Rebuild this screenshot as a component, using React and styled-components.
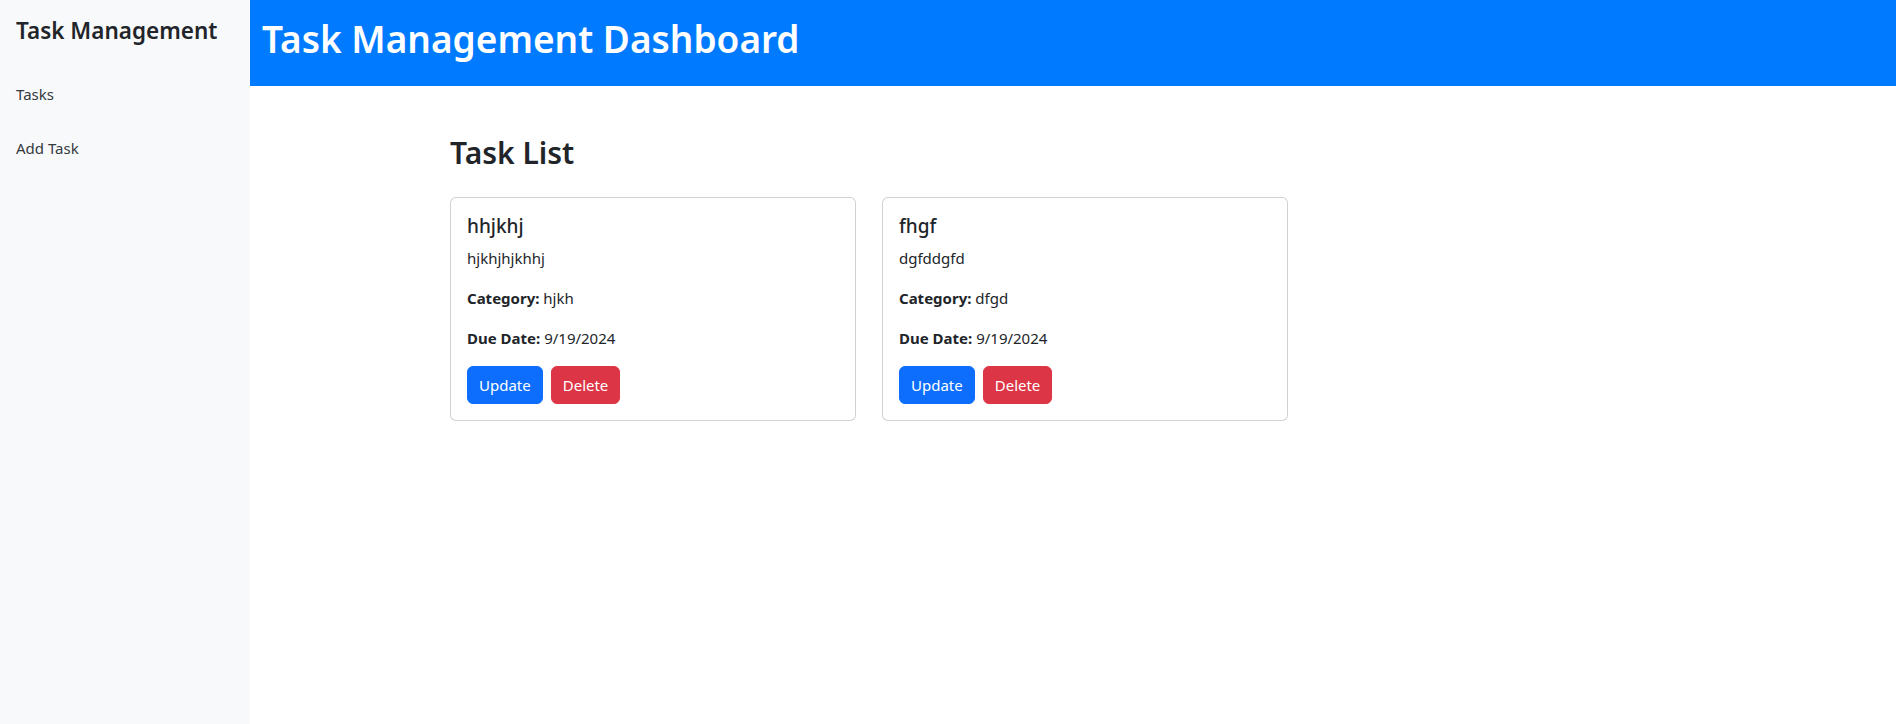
import React from "react"
import styled, { createGlobalStyle } from "styled-components"

const GlobalStyle = createGlobalStyle`
  * {
    box-sizing: border-box;
  }

  body {
    margin: 0;
    font-family: "Noto Sans", "Open Sans", Arial, sans-serif;
    font-size: 16px;
    line-height: 1.5;
    color: #212529;
    background: #fff;
  }
`

const Layout = styled.div`
  display: flex;
  min-height: 100vh;
`

const Sidebar = styled.aside`
  width: 250px;
  flex-shrink: 0;
  background: #f8f9fa;
  padding: 17px 16px;
`

const Brand = styled.h4`
  margin: 0 0 23px;
  font-size: 22.5px;
  font-weight: 600;
  line-height: 1.2;
`

const NavList = styled.ul`
  list-style: none;
  margin: 0;
  padding: 0;
`

const NavItem = styled.li`
  padding: 15px 0;
  font-size: 15px;
  line-height: 24px;
  color: #343a40;
  cursor: pointer;
`

const Main = styled.main`
  flex: 1;
  display: flex;
  flex-direction: column;
`

const Header = styled.header`
  background: #007bff;
  height: 86px;
  padding: 17px 12px 0;
`

const HeaderTitle = styled.h1`
  margin: 0;
  color: #fff;
  font-size: 37px;
  font-weight: 600;
  line-height: 1.2;
`

const Content = styled.section`
  padding: 48px 0 0 200px;
`

const PageTitle = styled.h2`
  margin: 0 0 25px;
  font-size: 30px;
  font-weight: 600;
  line-height: 1.25;
`

const CardGrid = styled.div`
  display: flex;
  gap: 26px;
`

const Card = styled.div`
  width: 406px;
  border: 1px solid rgba(0, 0, 0, 0.175);
  border-radius: 6px;
  padding: 16px;
  background: #fff;
`

const CardTitle = styled.h5`
  margin: 0 0 8px;
  font-size: 19px;
  font-weight: 500;
  line-height: 24px;
`

const CardText = styled.p`
  margin: 0 0 16px;
  font-size: 15px;
  line-height: 24px;
`

const Actions = styled.div`
  display: flex;
  gap: 8px;
`

const Button = styled.button`
  font-family: inherit;
  font-size: 15px;
  line-height: 24px;
  padding: 6px 11px;
  border: 1px solid ${p => (p.$danger ? "#dc3545" : "#0d6efd")};
  border-radius: 6px;
  background: ${p => (p.$danger ? "#dc3545" : "#0d6efd")};
  color: #fff;
  cursor: pointer;
`

const tasks = [
  { id: 1, title: "hhjkhj", description: "hjkhjhjkhhj", category: "hjkh", dueDate: "9/19/2024" },
  { id: 2, title: "fhgf", description: "dgfddgfd", category: "dfgd", dueDate: "9/19/2024" },
]

const TaskCard = ({ task }) => (
  <Card>
    <CardTitle>{task.title}</CardTitle>
    <CardText>{task.description}</CardText>
    <CardText>
      <strong>Category:</strong> {task.category}
    </CardText>
    <CardText>
      <strong>Due Date:</strong> {task.dueDate}
    </CardText>
    <Actions>
      <Button>Update</Button>
      <Button $danger>Delete</Button>
    </Actions>
  </Card>
)

const App = () => {
  return (
    <>
      <GlobalStyle />
      <Layout>
        <Sidebar>
          <Brand>Task Management</Brand>
          <NavList>
            <NavItem>Tasks</NavItem>
            <NavItem>Add Task</NavItem>
          </NavList>
        </Sidebar>
        <Main>
          <Header>
            <HeaderTitle>Task Management Dashboard</HeaderTitle>
          </Header>
          <Content>
            <PageTitle>Task List</PageTitle>
            <CardGrid>
              {tasks.map(task => (
                <TaskCard key={task.id} task={task} />
              ))}
            </CardGrid>
          </Content>
        </Main>
      </Layout>
    </>
  )
}

export default App
